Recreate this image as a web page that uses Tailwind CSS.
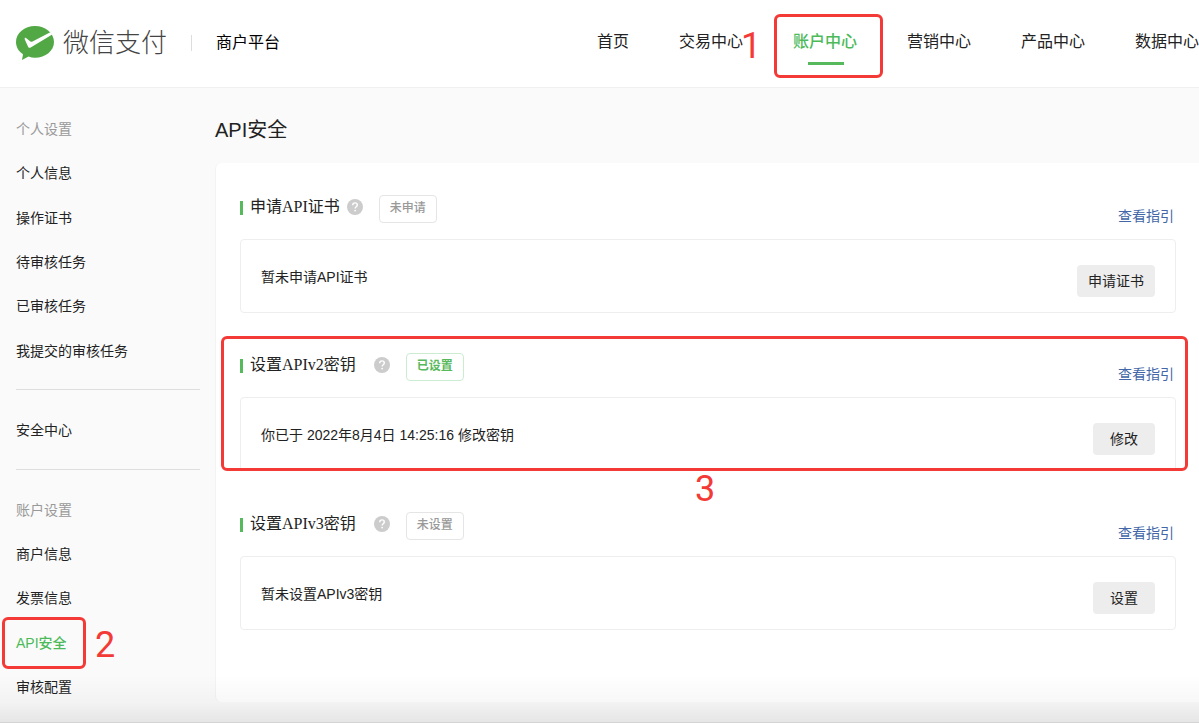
<!DOCTYPE html>
<html lang="zh-CN">
<head>
<meta charset="utf-8">
<meta name="viewport" content="width=device-width, initial-scale=1">
<title>微信支付商户平台 - API安全</title>
<script src="https://cdn.jsdelivr.net/npm/@tailwindcss/browser@4"></script>
</head>
<body class="bg-[#fafafa] font-['Liberation_Sans','Noto_Sans_CJK_SC',sans-serif] text-sm text-[#222]">
<div class="relative flex min-h-screen flex-col overflow-hidden">

  <header class="flex h-[88px] items-center border-b border-[#f0f0f0] bg-white pb-0.5 pl-4 whitespace-nowrap">
    <a href="#" class="flex items-center gap-[9px]">
      <svg class="h-[34px] w-[38px]" viewBox="0 0 38 34" aria-hidden="true">
        <path fill="#52a845" d="M19 0C8.500 0 0 7 0 16c0 5 2.600 9.300 7 12.300L6 34l6.500-3.400c2 .8 4.300 1.200 6.500 1.200 10.500 0 19-7 19-15.800C38 7 29.500 0 19 0Z"/>
        <path fill="#fff" d="M34.300 6.200 36.200 8.600 14.700 21.500c-1 .6-1.900.4-2.500-.5L8.700 13.200c-.2-1 .4-1.600 1.300-1.200l4.400 3.400c.7.4 1.400.5 2.100.1Z"/>
      </svg>
      <span class="text-[26px] leading-8 font-light text-[#444]">微信支付</span>
    </a>
    <span class="mx-6 h-4 w-px bg-[#ddd]"></span>
    <a href="#" class="text-base text-black">商户平台</a>
    <nav class="ml-auto flex gap-[50px] pb-0.5 text-base leading-6">
      <a href="#">首页</a>
      <a href="#" class="relative">交易中心
        <span class="absolute left-[62px] top-0 font-[Roboto,sans-serif] text-[36px] leading-8 text-[#f43a36]">1</span>
      </a>
      <a href="#" class="relative font-medium text-[#4dba5a]">账户中心
        <span class="absolute left-[15px] top-8 h-[3px] w-9 bg-[#56b95c]"></span>
        <span class="absolute -left-[19px] -top-4 h-16 w-[109px] rounded-md border-3 border-[#f43a36]"></span>
      </a>
      <a href="#">营销中心</a>
      <a href="#">产品中心</a>
      <a href="#">数据中心</a>
    </nav>
  </header>

  <div class="flex flex-1 pb-[21px]">
    <aside class="-mb-[21px] w-[200px] shrink-0 pt-[19px] pl-4">
      <section class="grid h-[266px] grid-rows-6 items-center">
        <h2 class="text-[#999]">个人设置</h2>
        <a href="#">个人信息</a>
        <a href="#">操作证书</a>
        <a href="#">待审核任务</a>
        <a href="#">已审核任务</a>
        <a href="#">我提交的审核任务</a>
      </section>
      <hr class="mt-4 border-[#dedede]">
      <section class="mt-[18px] flex h-11 items-center">
        <a href="#">安全中心</a>
      </section>
      <hr class="mt-[17px] border-[#dedede]">
      <section class="mt-[18px] grid h-[221px] grid-rows-5 items-center">
        <h2 class="text-[#999]">账户设置</h2>
        <a href="#">商户信息</a>
        <a href="#">发票信息</a>
        <a href="#" class="relative font-medium text-[#4dba5a]">API安全
          <span class="absolute -left-[14px] -top-4 h-[52px] w-[84px] rounded-md border-3 border-[#f43a36]"></span>
          <span class="absolute left-[79px] -top-1 font-[Roboto,sans-serif] text-[36px] leading-8 font-normal text-[#f43a36]">2</span>
        </a>
        <a href="#">审核配置</a>
      </section>
    </aside>

    <main class="min-w-0 flex-1 pt-7 pl-[15px]">
      <h1 class="text-xl leading-7">API安全</h1>
      <div class="mt-[19px] rounded-l-md border-l border-[#f3f3f3] bg-white py-8 pr-[23px] pl-6">
        <div class="grid h-[475px] grid-rows-3">

          <section>
            <div class="flex h-11 items-start">
              <span class="mt-[6px] h-[14px] w-[3px] bg-[#56b95c]"></span>
              <h2 class="ml-[7px] font-['Liberation_Serif','Noto_Sans_CJK_SC',serif] text-base leading-6">申请API证书</h2>
              <button type="button" aria-label="帮助" class="mt-1 ml-[7px]">
                <svg class="size-4" viewBox="0 0 16 16"><circle cx="8" cy="8" r="8" fill="#ccc"/><path d="M5.700 6.200C5.700 4.700 6.700 3.900 8 3.900s2.300.8 2.300 2.100c0 1.700-2.200 1.800-2.200 3.500" fill="none" stroke="#fff" stroke-width="1.400"/><circle cx="8.100" cy="11.600" r=".9" fill="#fff"/></svg>
              </button>
              <span class="ml-4 h-7 w-[58px] rounded-sm border border-[#e5e5e5] text-center text-xs leading-6 font-medium text-[#999]">未申请</span>
              <a href="#" class="mt-2 ml-auto pr-0.5 leading-[26px] text-[#4266a8]">查看指引</a>
            </div>
            <div class="flex items-start justify-between rounded-sm border border-[#eee] px-5 pt-[25px] pb-[15px]">
              <p class="leading-6">暂未申请API证书</p>
              <button type="button" class="h-8 min-w-[62px] rounded-sm bg-[#ededed] px-[11px]">申请证书</button>
            </div>
          </section>

          <section class="relative">
            <div class="flex h-11 items-start">
              <span class="mt-[6px] h-[14px] w-[3px] bg-[#56b95c]"></span>
              <h2 class="ml-[7px] font-['Liberation_Serif','Noto_Sans_CJK_SC',serif] text-base leading-6">设置APIv2密钥</h2>
              <button type="button" aria-label="帮助" class="mt-1 ml-[18px]">
                <svg class="size-4" viewBox="0 0 16 16"><circle cx="8" cy="8" r="8" fill="#ccc"/><path d="M5.700 6.200C5.700 4.700 6.700 3.900 8 3.900s2.300.8 2.300 2.100c0 1.700-2.200 1.800-2.200 3.500" fill="none" stroke="#fff" stroke-width="1.400"/><circle cx="8.100" cy="11.600" r=".9" fill="#fff"/></svg>
              </button>
              <span class="ml-4 h-7 w-[58px] rounded-sm border border-[#ccecd2] text-center text-xs leading-6 font-bold text-[#56b95c]">已设置</span>
              <a href="#" class="mt-2 ml-auto pr-0.5 leading-[26px] text-[#4266a8]">查看指引</a>
            </div>
            <div class="flex items-start justify-between rounded-sm border border-[#eee] px-5 pt-[25px] pb-[15px]">
              <p class="leading-6">你已于 2022年8月4日 14:25:16 修改密钥</p>
              <button type="button" class="h-8 min-w-[62px] rounded-sm bg-[#ededed] px-[11px]">修改</button>
            </div>
            <span class="pointer-events-none absolute -top-[17px] -right-3 -left-[19px] h-[135px] rounded-md border-3 border-[#f43a36]"></span>
            <span class="absolute top-[120px] left-[455px] font-[Roboto,sans-serif] text-[36px] leading-8 text-[#f43a36]">3</span>
          </section>

          <section>
            <div class="flex h-11 items-start">
              <span class="mt-[6px] h-[14px] w-[3px] bg-[#56b95c]"></span>
              <h2 class="ml-[7px] font-['Liberation_Serif','Noto_Sans_CJK_SC',serif] text-base leading-6">设置APIv3密钥</h2>
              <button type="button" aria-label="帮助" class="mt-1 ml-[18px]">
                <svg class="size-4" viewBox="0 0 16 16"><circle cx="8" cy="8" r="8" fill="#ccc"/><path d="M5.700 6.200C5.700 4.700 6.700 3.900 8 3.900s2.300.8 2.300 2.100c0 1.700-2.200 1.800-2.200 3.500" fill="none" stroke="#fff" stroke-width="1.400"/><circle cx="8.100" cy="11.600" r=".9" fill="#fff"/></svg>
              </button>
              <span class="ml-4 h-7 w-[58px] rounded-sm border border-[#e5e5e5] text-center text-xs leading-6 font-medium text-[#999]">未设置</span>
              <a href="#" class="mt-2 ml-auto pr-0.5 leading-[26px] text-[#4266a8]">查看指引</a>
            </div>
            <div class="flex items-start justify-between rounded-sm border border-[#eee] px-5 pt-[25px] pb-[15px]">
              <p class="leading-6">暂未设置APIv3密钥</p>
              <button type="button" class="h-8 min-w-[62px] rounded-sm bg-[#ededed] px-[11px]">设置</button>
            </div>
          </section>

        </div>
      </div>
    </main>
  </div>

  <div class="pointer-events-none absolute inset-x-0 bottom-0 h-12 border-b border-black/15 bg-linear-to-b from-black/0 via-black/3 via-60% to-black/8"></div>
</div>
</body>
</html>
